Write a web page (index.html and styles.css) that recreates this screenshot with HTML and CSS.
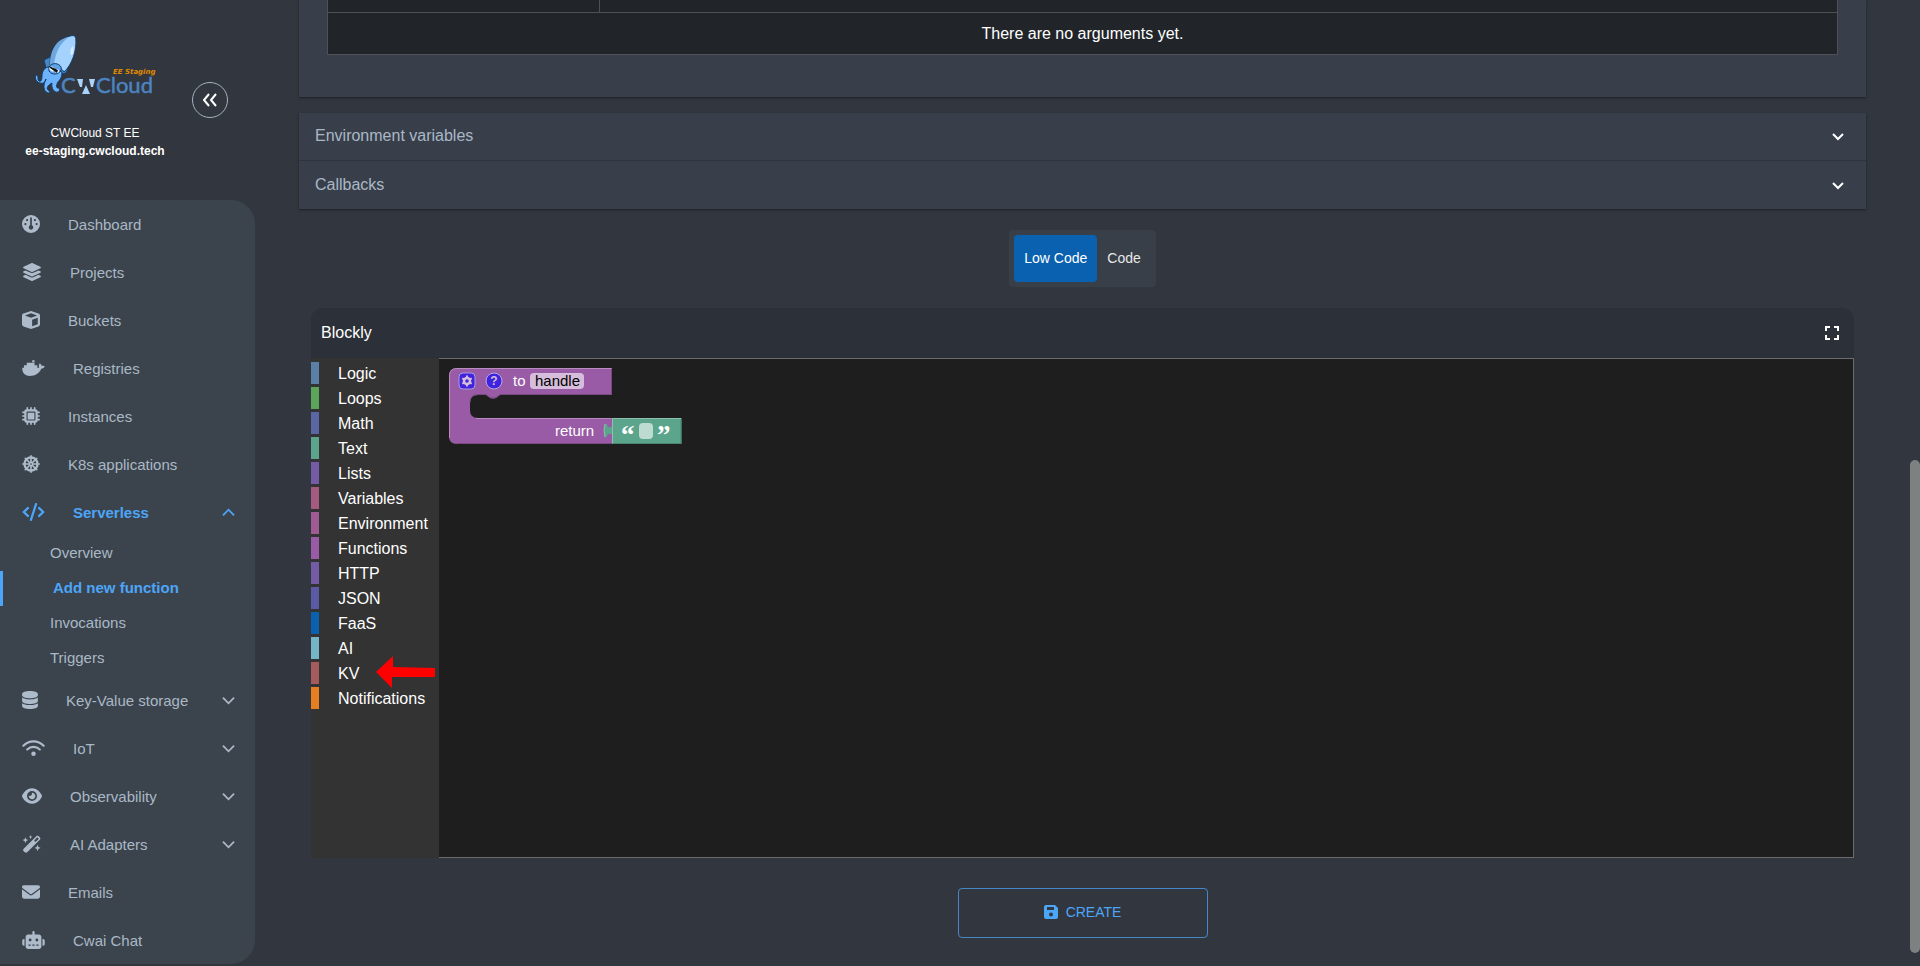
FILE: index.html
```html
<!DOCTYPE html>
<html lang="en">
<head>
<meta charset="utf-8">
<title>CWCloud - Add new function</title>
<link rel="stylesheet" href="styles.css">
</head>
<body>
<div class="app">
  <aside class="sidebar">
    <header class="brand">
      <div class="brand-info">
        <svg class="logo" viewBox="32 32 124 72" role="img" aria-label="CWCloud EE Staging">
          <g stroke="#12406f" stroke-width="1" stroke-linejoin="round">
            <path d="M50 57l-6 3 2 8 6-2zM61 68l7 1-2 4-6 1z" fill="#4a86c4"/>
            <path d="M48 67c-4 1-6 5-6 9 0 4-1 6-3 5-2-1 0-4-2-6-3 0-2 7 3 8 4 1 5-1 6-4-3 6-3 12 2 14 2 0 2-2 0-3-2-2 0-5 4-7-1 5 2 10 6 9 2-1 2-4-0-4-2 0-2-3 0-6 3-3 4-6 4-10z" fill="#6db3fb"/>
            <path d="M50 65C50 51 56 38 73 35.500q2.500 0 2.800 3C77 50 72 65 64 72c-4-6-9-7-14-7z" fill="#a3d2ff"/>
            <path d="M50 65C50 51 56 39 69 37C60 43 55 53 54 65z" fill="#6ea6dd" stroke="none"/>
            <path d="M49 67c3-5 10-4 12 0 1 4-2 7-6 7-5 0-7-3-6-7z" fill="#5ea3e8"/>
          </g>
          <path d="M72.500 46c2 3 1 8-1 9.500-2-1-1-7.500 1-9.500z" fill="#d8ecff"/>
          <ellipse cx="52" cy="69" rx="3" ry="2" fill="#fff" transform="rotate(35 52 69)"/>
          <ellipse cx="57" cy="71" rx="2" ry="2" fill="#fff"/>
          <path d="M49 66l9 4-1 3-7-5z" fill="#111"/>
          <text x="61" y="93" class="logo-name">C</text>
          <path d="M77 79h6l-1 8h-2zM89 79h6l-2 8h-2zM86 85l4 9h-8z" fill="#a9d3fb"/>
          <text x="96" y="93" class="logo-name">Cloud</text>
          <text x="113" y="74" class="logo-tag">EE Staging</text>
        </svg>
        <p class="brand-line">CWCloud ST EE</p>
        <p class="brand-line brand-host">ee-staging.cwcloud.tech</p>
      </div>
      <button class="collapse" type="button" aria-label="Collapse menu">
        <svg viewBox="0 0 16 16"><path d="M7 2L2 8l5 6M14 2L9 8l5 6"/></svg>
      </button>
    </header>
    <nav class="menu">
      <a class="item" href="#"><svg class="ic" viewBox="0 0 512 512"><path fill-rule="evenodd" d="M0 256a256 256 0 1 1 512 0A256 256 0 1 1 0 256zM320 352c0 35.300-28.700 64-64 64s-64-28.700-64-64c0-26.900 16.500-49.900 40-59.300V88c0-13.300 10.700-24 24-24s24 10.700 24 24V292.700c23.500 9.500 40 32.500 40 59.300zM144 176a32 32 0 1 0 0-64 32 32 0 1 0 0 64zm-16 80a32 32 0 1 0-64 0 32 32 0 1 0 64 0zm288 32a32 32 0 1 0 0-64 32 32 0 1 0 0 64zM400 144a32 32 0 1 0-64 0 32 32 0 1 0 64 0z"/></svg><span>Dashboard</span></a>
      <a class="item" href="#"><svg class="ic ic-m" viewBox="0 0 576 512"><path d="M264.500 5.200c14.900-6.900 32.100-6.900 47 0l218.600 101c8.500 3.900 13.900 12.400 13.900 21.800s-5.400 17.900-13.900 21.800l-218.600 101c-14.900 6.900-32.100 6.900-47 0L45.900 149.800C37.400 145.800 32 137.300 32 128s5.400-17.900 13.900-21.800L264.500 5.200zM476.900 209.600l53.200 24.600c8.500 3.900 13.900 12.400 13.900 21.800s-5.400 17.900-13.900 21.800l-218.600 101c-14.900 6.900-32.100 6.900-47 0L45.900 277.800C37.400 273.800 32 265.300 32 256s5.400-17.900 13.900-21.800l53.200-24.600 152 70.200c23.400 10.800 50.400 10.800 73.800 0l152-70.200zm-152 198.200l152-70.200 53.200 24.600c8.500 3.900 13.900 12.400 13.900 21.800s-5.400 17.900-13.900 21.800l-218.600 101c-14.900 6.900-32.100 6.900-47 0L45.900 405.800C37.400 401.800 32 393.300 32 384s5.400-17.900 13.900-21.800l53.200-24.600 152 70.200c23.400 10.800 50.400 10.800 73.800 0z"/></svg><span>Projects</span></a>
      <a class="item" href="#"><svg class="ic" viewBox="0 0 512 512"><path fill-rule="evenodd" d="M234.500 5.700c13.900-5 29.100-5 43.100 0l192 68.600C495 83.400 512 107.500 512 134.600V377.400c0 27-17 51.200-42.500 60.300l-192 68.600c-13.900 5-29.100 5-43.100 0l-192-68.600C17 428.600 0 404.500 0 377.400V134.600c0-27 17-51.200 42.500-60.300l192-68.600zM256 66L82.300 128 256 190l173.700-62L256 66zm32 368.600l160-57.100v-188L288 246.600v188z"/></svg><span>Buckets</span></a>
      <a class="item" href="#"><svg class="ic ic-l" viewBox="0 0 640 512"><path d="M626.700 204.700c-14.400-9.700-47.600-13.200-73.100-8.400-3.300-24-16.700-44.900-41.100-63.700l-14-9.300-9.300 14c-18.400 27.800-23.400 73.600-3.700 103.800-8.700 4.700-25.800 11.100-48.400 10.700H2.400c-8.700 50.800 5.800 116.800 44 162.100 37.100 43.900 92.700 66.200 165.400 66.200 157.400 0 273.900-72.500 328.400-204.200 21.400.4 67.600.1 91.300-45.200 1.500-2.500 6.600-13.200 8.500-17.100zM284 32h66v61h-66zM128 105h222v72h78v75H50v-75h78z"/></svg><span>Registries</span></a>
      <a class="item" href="#"><svg class="ic" viewBox="0 0 512 512"><path fill-rule="evenodd" d="M176 24c0-13.300-10.700-24-24-24s-24 10.700-24 24V64c-35.300 0-64 28.700-64 64H24c-13.300 0-24 10.700-24 24s10.700 24 24 24H64v56H24c-13.300 0-24 10.700-24 24s10.700 24 24 24H64v56H24c-13.300 0-24 10.700-24 24s10.700 24 24 24H64c0 35.300 28.700 64 64 64v40c0 13.300 10.700 24 24 24s24-10.700 24-24V448h56v40c0 13.300 10.700 24 24 24s24-10.700 24-24V448h56v40c0 13.300 10.700 24 24 24s24-10.700 24-24V448c35.300 0 64-28.700 64-64h40c13.300 0 24-10.700 24-24s-10.700-24-24-24H448V280h40c13.300 0 24-10.700 24-24s-10.700-24-24-24H448V176h40c13.300 0 24-10.700 24-24s-10.700-24-24-24H448c0-35.300-28.700-64-64-64V24c0-13.300-10.700-24-24-24s-24 10.700-24 24V64H280V24c0-13.300-10.700-24-24-24s-24 10.700-24 24V64H176V24zM160 128H352c17.700 0 32 14.300 32 32V352c0 17.700-14.300 32-32 32H160c-17.700 0-32-14.300-32-32V160c0-17.700 14.300-32 32-32zm192 32H160V352H352V160z"/></svg><span>Instances</span></a>
      <a class="item" href="#"><svg class="ic" viewBox="0 0 512 512"><g class="line"><circle cx="256" cy="256" r="186" stroke-width="64"/><circle cx="256" cy="256" r="48" stroke-width="44"/><path stroke-width="46" d="M256 24v464M24 256h464M92 92l328 328M420 92L92 420"/></g><circle cx="256" cy="256" r="24" class="hole"/></svg><span>K8s applications</span></a>
      <a class="item active" href="#"><svg class="ic ic-l" viewBox="0 0 640 512"><g class="line" stroke-width="64"><path d="M392 32L248 480M160 144L42 256l118 112M480 144l118 112-118 112"/></g></svg><span>Serverless</span><svg class="chev" viewBox="0 0 14 14"><path d="M1 10l6-6 6 6"/></svg></a>
      <div class="submenu">
        <a class="subitem" href="#">Overview</a>
        <a class="subitem current" href="#">Add new function</a>
        <a class="subitem" href="#">Invocations</a>
        <a class="subitem" href="#">Triggers</a>
      </div>
      <a class="item" href="#"><svg class="ic ic-s" viewBox="0 0 448 512"><path d="M448 80v48c0 44-100 80-224 80S0 172 0 128V80C0 36 100 0 224 0s224 36 224 80zM393 215c21-8 40-17 55-28v101c0 44-100 80-224 80S0 332 0 288V187c15 11 34 20 55 28 45 16 105 25 169 25s124-9 169-25zM0 347c15 11 34 20 55 28 45 16 105 25 169 25s124-9 169-25c21-8 40-17 55-28v85c0 44-100 80-224 80S0 476 0 432z"/></svg><span>Key-Value storage</span><svg class="chev" viewBox="0 0 14 14"><path d="M1 4l6 6 6-6"/></svg></a>
      <a class="item" href="#"><svg class="ic ic-l" viewBox="0 0 640 512"><g class="line" stroke-width="62"><path d="M32 190c160-166 416-166 576 0M142 296c100-98 256-98 356 0"/></g><circle cx="320" cy="416" r="64"/></svg><span>IoT</span><svg class="chev" viewBox="0 0 14 14"><path d="M1 4l6 6 6-6"/></svg></a>
      <a class="item" href="#"><svg class="ic ic-m" viewBox="0 0 576 512"><path fill-rule="evenodd" d="M288 32c-80.800 0-145.500 36.800-192.600 80.600C48.600 156 17.300 208 2.500 243.700c-3.300 7.900-3.300 16.700 0 24.600C17.300 304 48.600 356 95.400 399.400C142.500 443.200 207.200 480 288 480s145.500-36.800 192.600-80.600c46.800-43.500 78.100-95.400 93-131.100c3.300-7.900 3.300-16.700 0-24.600c-14.900-35.700-46.200-87.700-93-131.100C433.500 68.800 368.800 32 288 32zM144 256a144 144 0 1 1 288 0 144 144 0 1 1 -288 0zm144-64c0 35.300-28.700 64-64 64c-7.100 0-13.900-1.200-20.300-3.300c-5.500-1.800-11.900 1.600-11.700 7.400c.3 6.900 1.300 13.800 3.200 20.700c13.700 51.200 66.400 81.600 117.600 67.900s81.600-66.400 67.900-117.600c-11.100-41.500-47.800-69.400-88.600-71.100c-5.800-.2-9.200 6.100-7.400 11.700c2.100 6.400 3.300 13.200 3.300 20.300z"/></svg><span>Observability</span><svg class="chev" viewBox="0 0 14 14"><path d="M1 4l6 6 6-6"/></svg></a>
      <a class="item" href="#"><svg class="ic ic-m" viewBox="0 0 576 512"><path fill-rule="evenodd" d="M47 395L412 30c19-19 49-19 68 0l34 34c19 19 19 49 0 68L149 497c-19 19-49 19-68 0l-34-34c-19-19-19-49 0-68zM350 153l42 42 92-92-42-42zM98 60l24 60 60 24-60 24-24 64-24-64-60-24 60-24zM248 0l16 40 40 16-40 16-16 44-16-44-40-16 40-16zM448 276l26 66 66 26-66 26-26 68-26-68-66-26 66-26z"/></svg><span>AI Adapters</span><svg class="chev" viewBox="0 0 14 14"><path d="M1 4l6 6 6-6"/></svg></a>
      <a class="item" href="#"><svg class="ic" viewBox="0 0 512 512"><path d="M48 64C21.500 64 0 85.500 0 112c0 15.100 7.100 29.300 19.200 38.400L236.800 313.600c11.400 8.500 27 8.500 38.400 0L492.800 150.400c12.100-9.100 19.200-23.300 19.200-38.400c0-26.500-21.500-48-48-48H48zM0 176V384c0 35.300 28.700 64 64 64H448c35.300 0 64-28.700 64-64V176L294.400 339.200c-22.800 17.100-54 17.100-76.800 0L0 176z"/></svg><span>Emails</span></a>
      <a class="item" href="#"><svg class="ic ic-l" viewBox="0 0 640 512"><path fill-rule="evenodd" d="M320 0c18 0 32 14 32 32v64h120c40 0 72 32 72 72v272c0 40-32 72-72 72H168c-40 0-72-32-72-72V168c0-40 32-72 72-72h120V32c0-18 14-32 32-32zM176 384v32h64v-32zm112 0v32h64v-32zm112 0v32h64v-32zM264 256a40 40 0 1 0-80 0 40 40 0 1 0 80 0zm192 0a40 40 0 1 0-80 0 40 40 0 1 0 80 0zM48 224h16v192H48c-26 0-48-22-48-48v-96c0-26 22-48 48-48zm544 0c26 0 48 22 48 48v96c0 26-22 48-48 48h-16V224z"/></svg><span>Cwai Chat</span></a>
    </nav>
  </aside>

  <main class="content">
    <section class="card">
      <table class="args">
        <thead><tr><th class="col-name"></th><th></th></tr></thead>
        <tbody><tr><td colspan="2">There are no arguments yet.</td></tr></tbody>
      </table>
    </section>

    <section class="accordion">
      <button class="fold" type="button">Environment variables<svg viewBox="0 0 14 14"><path d="M2 5l5 5 5-5"/></svg></button>
      <button class="fold" type="button">Callbacks<svg viewBox="0 0 14 14"><path d="M2 5l5 5 5-5"/></svg></button>
    </section>

    <div class="modes">
      <button class="mode selected" type="button">Low Code</button>
      <button class="mode" type="button">Code</button>
    </div>

    <section class="editor">
      <header class="editor-head">
        <h2>Blockly</h2>
        <button class="full" type="button" aria-label="Full screen"><svg viewBox="0 0 14 14"><path d="M1 5V1h4M9 1h4v4M13 9v4H9M5 13H1V9"/></svg></button>
      </header>
      <div class="editor-body">
        <ul class="toolbox">
          <li class="cat logic">Logic</li>
          <li class="cat loops">Loops</li>
          <li class="cat math">Math</li>
          <li class="cat text">Text</li>
          <li class="cat lists">Lists</li>
          <li class="cat variables">Variables</li>
          <li class="cat environment">Environment</li>
          <li class="cat functions">Functions</li>
          <li class="cat http">HTTP</li>
          <li class="cat json">JSON</li>
          <li class="cat faas">FaaS</li>
          <li class="cat ai">AI</li>
          <li class="cat kv">KV<svg class="arrow" viewBox="0 0 60 32"><path d="M0 16L17 0v11l42 1v9H16v11z"/></svg></li>
          <li class="cat notifications">Notifications</li>
        </ul>
        <div class="workspace">
          <svg class="blocks" viewBox="439 359 260 100">
            <path d="M457 368H612V395H500l-4 3q-3 1-6 0l-4-3H478q-8 0-8 8v7q0 8 8 8H612v26H457q-8 0-8-8V376q0-8 8-8z" fill="#995ba5"/>
            <path d="M449.500 438V376q0-7.500 7.500-7.500H611.500M476 418.500H611.500" fill="none" stroke="#b88cc0"/>
            <path d="M611.500 369V394.500H500l-4 3q-3 1-6 0l-4-3H478q-8 0-8 8M457 443.500H611.500" fill="none" stroke="#7a4984"/>
            <rect x="459" y="373" width="16" height="16" rx="4" fill="#3f23dd" stroke="#a99be8"/>
            <g stroke="#d5bedb" fill="none"><circle cx="467" cy="381" r="3" stroke-width="2.500"/><path stroke-width="2" d="M467 375.500v2M467 384.500v2M462.200 378.300l2 1M469.800 382.700l2 1M462.200 383.700l2-1M469.800 379.300l2-1"/></g>
            <circle cx="494" cy="381" r="8" fill="#3f23dd" stroke="#b9a9e8"/>
            <text x="494" y="385" class="help">?</text>
            <text x="513" y="386" class="label">to</text>
            <rect x="530" y="373" width="54" height="16" rx="4" fill="#d6bddb"/>
            <text x="535" y="386" class="label dark">handle</text>
            <text x="555" y="436" class="label">return</text>
            <path d="M612 418h69.500v26H612V435q-1-2-4-1-1 4-3 3-2-7 0-13 2-1 3 3 3 1 4-1z" fill="#5ba58c"/>
            <path d="M612.500 443V418.500H681M605 437q-2-7 0-13" fill="none" stroke="#8cc0af"/>
            <path d="M681 419v24.500H613" fill="none" stroke="#498470"/>
            <text x="621" y="444" class="quote">“</text>
            <rect x="639" y="423" width="14" height="16" rx="4" fill="#bddbd1"/>
            <text x="657" y="444" class="quote">”</text>
          </svg>
        </div>
      </div>
    </section>

    <button class="create" type="button"><svg viewBox="0 0 14 14"><path fill-rule="evenodd" d="M2 0h9l3 3v9q0 2-2 2H2q-2 0-2-2V2q0-2 2-2zM3 2v3h7V2zM7 7.500a2 2 0 1 0 0 4 2 2 0 1 0 0-4z"/></svg>CREATE</button>
  </main>

  <div class="scroll-track"><div class="scroll-thumb"></div></div>
</div>
</body>
</html>
```
FILE: styles.css
```css
* { box-sizing: border-box; }
body {
  margin: 0;
  background: #32363e;
  color: #fff;
  font-family: "Liberation Sans", Arial, sans-serif;
}
button { font: inherit; color: inherit; border: 0; background: none; padding: 0; cursor: pointer; }
a { color: inherit; text-decoration: none; }
.app { display: flex; min-height: 100vh; }

/* Sidebar */
.sidebar { flex: 0 0 255px; }
.brand { display: flex; height: 200px; }
.brand-info { width: 190px; padding-top: 32px; }
.logo { display: block; width: 124px; height: 72px; margin: 0 0 20px 32px; }
.logo-name { font: 22px Lato, sans-serif; fill: #4c84c0; stroke: #4c84c0; stroke-width: 0.5px; }
.logo-tag { font: italic bold 7px "DejaVu Sans", sans-serif; fill: #e08a00; }
.brand-line { margin: 0; text-align: center; font-size: 12px; line-height: 18px; }
.brand-host { font-weight: bold; }
.collapse {
  display: grid;
  place-items: center;
  width: 36px;
  height: 36px;
  margin: 82px 0 0 2px;
  border: 1px solid #a4b2c0;
  border-radius: 50%;
}
.collapse svg { width: 16px; height: 16px; fill: none; stroke: #fff; stroke-width: 2; }

.menu { background: #3b444d; border-radius: 0 24px 24px 0; color: #aab8c5; font-size: 15px; }
.item { display: flex; align-items: center; height: 48px; padding: 0 20px 0 22px; }
.item span { margin-left: 28px; flex: 1; }
.ic { width: 18px; height: 18px; fill: #aebbca; flex: none; }
.ic-s { width: 16px; }
.ic-m { width: 20px; }
.ic-l { width: 23px; }
.line { fill: none; stroke: #aebbca; stroke-linecap: round; stroke-linejoin: round; }
.hole { fill: #3b444d; }
.chev { width: 13px; height: 13px; fill: none; stroke: currentColor; stroke-width: 2; }
.active { color: #4da5f8; font-weight: bold; }
.active .line { stroke: #4da5f8; }
.subitem { display: flex; align-items: center; height: 35px; padding: 0 0 2px 50px; }
.current { border-left: 3px solid #4da5f8; color: #4da5f8; font-weight: bold; }

/* Main column */
.content { flex: 1; display: flex; flex-direction: column; padding: 0 44px 28px; }
.card { padding: 0 28px 42px; background: #383f4b; box-shadow: 0 1px 2px #1c2028; }
.args { width: 100%; border-collapse: collapse; background: #212529; font-size: 16px; }
.args th, .args td { border: 1px solid #4d5154; padding: 0; }
.args thead th { height: 12px; border-top: 0; }
.args .col-name { width: 18%; }
.args td { height: 42px; padding-top: 2px; text-align: center; }

.accordion { margin-top: 16px; background: #383f4b; box-shadow: 0 1px 2px #1c2028; }
.fold {
  display: flex;
  align-items: center;
  justify-content: space-between;
  width: 100%;
  height: 48px;
  padding: 0 21px 0 16px;
  color: #aab8c5;
  font-size: 16px;
}
.fold:first-child { border-bottom: 1px solid #30353d; }
.fold svg { width: 14px; height: 14px; fill: none; stroke: #fff; stroke-width: 2; }

.modes { display: flex; align-self: center; margin-top: 21px; padding: 5px; background: #383f49; border-radius: 4px; }
.mode { height: 47px; padding: 0 10px; border-radius: 4px; font-size: 14px; color: #e8e8e8; }
.selected { background: #0a61b0; color: #fff; }

.editor { margin: 21px 12px 0; }
.editor-head {
  display: flex;
  align-items: center;
  justify-content: space-between;
  height: 50px;
  padding: 0 15px 0 10px;
  background: #2c3038;
  border-radius: 12px 12px 0 0;
}
.editor-head h2 { margin: 0; font-size: 16px; font-weight: normal; }
.full svg { display: block; width: 14px; height: 14px; fill: none; stroke: #fff; stroke-width: 2; }
.editor-body { display: flex; height: 500px; }
.toolbox { flex: 0 0 128px; margin: 0; padding: 4px 0 0; background: #333; list-style: none; }
.cat {
  position: relative;
  height: 22px;
  margin-bottom: 3px;
  padding-left: 19px;
  border-left: 8px solid;
  font-size: 16px;
  line-height: 24px;
}
.logic { border-color: #5b80a5; }
.loops { border-color: #5ba55b; }
.math { border-color: #5b67a5; }
.text { border-color: #5ba58c; }
.lists { border-color: #745ba5; }
.variables { border-color: #a55b80; }
.environment { border-color: #a05b92; }
.functions { border-color: #995ba5; }
.http { border-color: #745ba5; }
.json { border-color: #5b5ba5; }
.faas { border-color: #0a61b0; }
.ai { border-color: #76b5c5; }
.kv { border-color: #a55b5b; }
.notifications { border-color: #e67e22; }
.arrow { position: absolute; left: 57px; top: -6px; width: 60px; height: 32px; fill: #f00; }

.workspace { flex: 1; background: #1e1e1e; border: 1px solid #6c6c6e; border-left: 0; }
.blocks { display: block; width: 260px; height: 100px; }
.label { font-size: 15px; fill: #fff; }
.dark { fill: #000; }
.help { font-size: 12px; font-weight: bold; fill: #d5bedb; text-anchor: middle; }
.quote { font: bold 27px "Liberation Serif", serif; fill: #fff; }

.create {
  display: flex;
  align-items: center;
  justify-content: center;
  gap: 8px;
  align-self: center;
  width: 250px;
  height: 50px;
  margin-top: 30px;
  padding-bottom: 2px;
  border: 1px solid #4687c8;
  border-radius: 4px;
  color: #4da5f8;
  font-size: 14px;
}
.create svg { width: 14px; height: 14px; fill: #4da5f8; }

.scroll-track { flex: 0 0 10px; display: grid; grid-template-rows: 460fr 493fr 13fr; }
.scroll-thumb { grid-row: 2; background: #7e8182; border-radius: 5px; }
```
